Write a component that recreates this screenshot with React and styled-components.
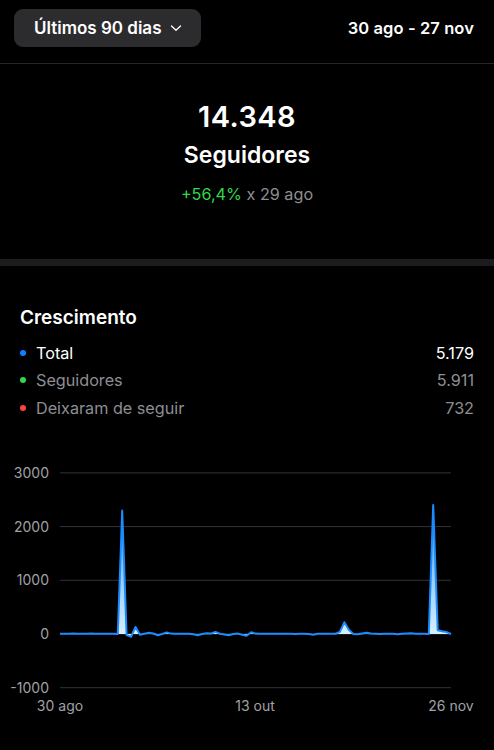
import React from "react";
import styled, { createGlobalStyle } from "styled-components";

const GlobalStyle = createGlobalStyle`
  html, body {
    margin: 0;
    padding: 0;
    background: #000;
  }

  body {
    font-family: Inter, "Liberation Sans", sans-serif;
    color: #fff;
    -webkit-font-smoothing: antialiased;
  }
`;

const Page = styled.div`
  width: 494px;
  min-height: 750px;
  background: #000;
`;

const Header = styled.header`
  height: 64px;
  display: flex;
  align-items: center;
  justify-content: space-between;
  padding: 0 20px 8px 14px;
  border-bottom: 1px solid #262628;
  box-sizing: border-box;
`;

const RangeButton = styled.button`
  display: flex;
  align-items: center;
  gap: 9px;
  height: 38px;
  padding: 0 19px 0 20px;
  border: none;
  border-radius: 9px;
  background: #2c2c2e;
  color: #fff;
  font-family: inherit;
  font-size: 17px;
  font-weight: 600;
  cursor: pointer;

  svg {
    margin-top: 1px;
  }
`;

const DateRange = styled.span`
  margin-top: 1px;
  font-size: 16.5px;
  font-weight: 600;
  letter-spacing: 0.1px;
`;

const Summary = styled.section`
  display: flex;
  flex-direction: column;
  align-items: center;
  padding: 35px 0 54px;
  border-bottom: 7px solid #1c1c1e;
`;

const BigNumber = styled.div`
  font-size: 29px;
  font-weight: 600;
  line-height: 36px;
  letter-spacing: 0.4px;
`;

const BigLabel = styled.div`
  margin-top: 5px;
  font-size: 23px;
  font-weight: 600;
  line-height: 30px;
`;

const Change = styled.div`
  margin-top: 13px;
  font-size: 16.2px;
  line-height: 22px;
  color: #8e8e93;
`;

const Positive = styled.span`
  color: #32d74b;
`;

const Growth = styled.section`
  padding: 40px 20px 0;
`;

const Title = styled.h2`
  margin: 0 0 9px;
  font-size: 19px;
  font-weight: 600;
  line-height: 24px;
`;

const Legend = styled.ul`
  list-style: none;
  margin: 0;
  padding: 0;
`;

const LegendRow = styled.li`
  display: flex;
  align-items: center;
  height: 27.5px;
  font-size: 16.2px;
  color: ${(p) => (p.$primary ? "#fff" : "#8e8e93")};
`;

const Dot = styled.span`
  width: 6px;
  height: 6px;
  border-radius: 50%;
  margin: 0 10px 0 0;
  background: ${(p) => p.$color};
`;

const LegendLabel = styled.span`
  flex: 1;
`;

const ChartWrap = styled.div`
  margin-top: 19px;
  height: 290px;

  svg {
    display: block;
    font-family: Inter, "Liberation Sans", sans-serif;
  }
`;

const Chevron = () => (
  <svg width="12" height="8" viewBox="0 0 12 8" fill="none">
    <path d="M1.5 2 L6 6.3 L10.5 2" stroke="#fff" strokeWidth="1.3" strokeLinecap="round" strokeLinejoin="round" />
  </svg>
);

// daily net growth, 30 ago .. 26 nov
const spikes = {
  3: 8, 5: 5, 7: 10, 9: 4, 11: 6, 13: 0,
  14: 2300, 15: -20, 16: -50, 17: 130, 18: -15, 19: 5, 20: 22, 21: 10,
  22: -22, 23: 0, 24: 30, 25: 8, 26: 5, 28: 6, 30: -5, 31: -22, 32: 0,
  33: 15, 34: 10, 35: 40, 36: 5, 37: -10, 38: -22, 39: 0, 40: 8,
  41: -15, 42: -32, 43: 32, 44: 8, 45: 5, 47: 4, 50: 6, 53: 2,
  56: 0, 57: -15, 58: 4, 60: 6, 62: 5, 63: 40, 64: 220, 65: 80, 66: 0,
  67: -5, 68: 10, 69: 22, 70: 8, 72: 0, 74: 4, 76: -5, 78: 10, 79: 14,
  81: 5, 83: 2, 84: 2400, 85: 70, 86: 50, 87: 35, 88: 0,
};
const data = Array.from({ length: 89 }, (_, i) => spikes[i] ?? 3);

const X0 = 60;
const X1 = 451;
const Y_ZERO = 193;
const PER = 53.7 / 1000;

const xAt = (i) => X0 + ((X1 - X0) * i) / (data.length - 1);
const yAt = (v) => Y_ZERO - v * PER;

const GrowthChart = () => {
  const ticks = [3000, 2000, 1000, 0, -1000];
  const line = data.map((v, i) => `${i ? "L" : "M"}${xAt(i).toFixed(1)} ${yAt(v).toFixed(1)}`).join(" ");
  const area = `${line} L${X1} ${Y_ZERO} L${X0} ${Y_ZERO} Z`;

  return (
    <svg width="494" height="290" viewBox="0 0 494 290">
      <defs>
        <linearGradient id="fill" gradientUnits="userSpaceOnUse" x1="0" y1="60" x2="0" y2={Y_ZERO}>
          <stop offset="0" stopColor="#3a9cf5" />
          <stop offset="1" stopColor="#d9efff" />
        </linearGradient>
      </defs>
      {ticks.map((t) => (
        <g key={t}>
          <line x1={X0} x2={X1} y1={yAt(t)} y2={yAt(t)} stroke="#333336" strokeWidth="1" />
          <text x="49" y={yAt(t) + 5} textAnchor="end" fontSize="14" fill="#a1a1a6">
            {t}
          </text>
        </g>
      ))}
      <path d={area} fill="url(#fill)" />
      <path d={line} fill="none" stroke="#1a8cff" strokeWidth="2" strokeLinejoin="round" />
      <text x="60" y="270" textAnchor="middle" fontSize="14" fill="#a1a1a6">30 ago</text>
      <text x="255" y="270" textAnchor="middle" fontSize="14" fill="#a1a1a6">13 out</text>
      <text x="451" y="270" textAnchor="middle" fontSize="14" fill="#a1a1a6">26 nov</text>
    </svg>
  );
};

const legend = [
  { label: "Total", value: "5.179", color: "#0a84ff", primary: true },
  { label: "Seguidores", value: "5.911", color: "#32d74b" },
  { label: "Deixaram de seguir", value: "732", color: "#ff453a" },
];

const App = () => (
  <Page>
    <GlobalStyle />
    <Header>
      <RangeButton>
        Últimos 90 dias
        <Chevron />
      </RangeButton>
      <DateRange>30 ago - 27 nov</DateRange>
    </Header>
    <Summary>
      <BigNumber>14.348</BigNumber>
      <BigLabel>Seguidores</BigLabel>
      <Change>
        <Positive>+56,4%</Positive> x 29 ago
      </Change>
    </Summary>
    <Growth>
      <Title>Crescimento</Title>
      <Legend>
        {legend.map((row) => (
          <LegendRow key={row.label} $primary={row.primary}>
            <Dot $color={row.color} />
            <LegendLabel>{row.label}</LegendLabel>
            <span>{row.value}</span>
          </LegendRow>
        ))}
      </Legend>
    </Growth>
    <ChartWrap>
      <GrowthChart />
    </ChartWrap>
  </Page>
);

export default App;
